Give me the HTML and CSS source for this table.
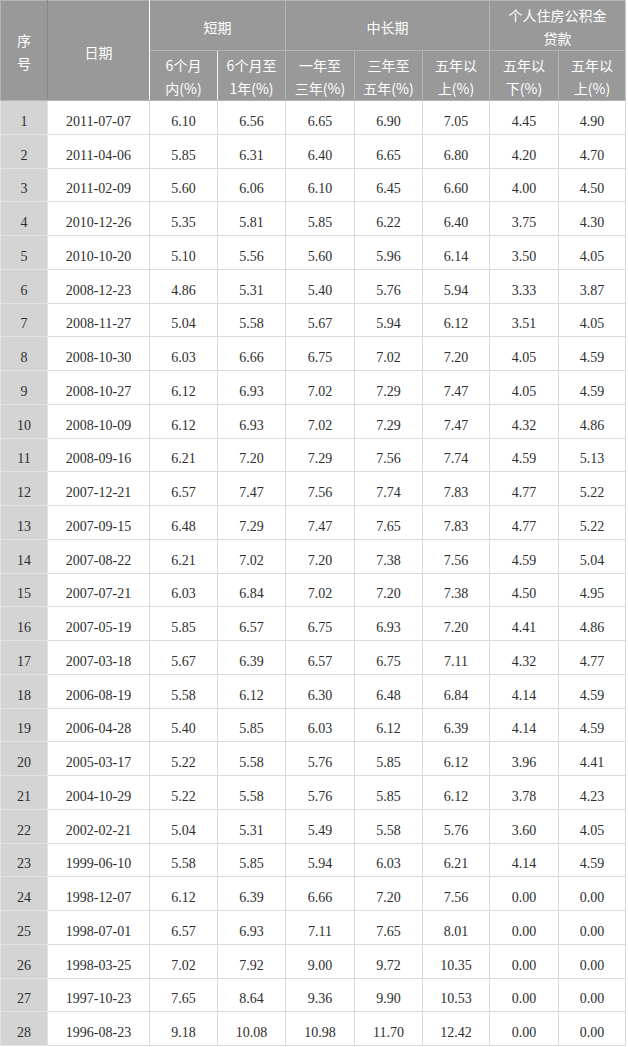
FILE: index.html
```html
<!DOCTYPE html>
<html lang="zh-CN">
<head>
<meta charset="utf-8">
<title>利率表</title>
<link rel="stylesheet" href="styles.css">
</head>
<body>
<table class="rates">
  <colgroup>
    <col class="c-no"><col class="c-date"><col class="c-a"><col class="c-a"><col class="c-b"><col class="c-a"><col class="c-c"><col class="c-b"><col class="c-c">
  </colgroup>
  <thead>
    <tr class="h1">
      <th rowspan="2" class="th-no">序<br>号</th>
      <th rowspan="2" class="th-date">日期</th>
      <th colspan="2">短期</th>
      <th colspan="3">中长期</th>
      <th colspan="2" class="th-last">个人住房公积金<br>贷款</th>
    </tr>
    <tr class="h2">
      <th class="th-w">6个月<br>内(%)</th>
      <th>6个月至<br>1年(%)</th>
      <th>一年至<br>三年(%)</th>
      <th>三年至<br>五年(%)</th>
      <th>五年以<br>上(%)</th>
      <th>五年以<br>下(%)</th>
      <th class="th-last">五年以<br>上(%)</th>
    </tr>
  </thead>
  <tbody>
    <tr><td class="no">1</td><td>2011-07-07</td><td>6.10</td><td>6.56</td><td>6.65</td><td>6.90</td><td>7.05</td><td>4.45</td><td>4.90</td></tr>
    <tr><td class="no">2</td><td>2011-04-06</td><td>5.85</td><td>6.31</td><td>6.40</td><td>6.65</td><td>6.80</td><td>4.20</td><td>4.70</td></tr>
    <tr><td class="no">3</td><td>2011-02-09</td><td>5.60</td><td>6.06</td><td>6.10</td><td>6.45</td><td>6.60</td><td>4.00</td><td>4.50</td></tr>
    <tr class="brk"><td class="no">4</td><td>2010-12-26</td><td>5.35</td><td>5.81</td><td>5.85</td><td>6.22</td><td>6.40</td><td>3.75</td><td>4.30</td></tr>
    <tr><td class="no">5</td><td>2010-10-20</td><td>5.10</td><td>5.56</td><td>5.60</td><td>5.96</td><td>6.14</td><td>3.50</td><td>4.05</td></tr>
    <tr><td class="no">6</td><td>2008-12-23</td><td>4.86</td><td>5.31</td><td>5.40</td><td>5.76</td><td>5.94</td><td>3.33</td><td>3.87</td></tr>
    <tr class="brk"><td class="no">7</td><td>2008-11-27</td><td>5.04</td><td>5.58</td><td>5.67</td><td>5.94</td><td>6.12</td><td>3.51</td><td>4.05</td></tr>
    <tr><td class="no">8</td><td>2008-10-30</td><td>6.03</td><td>6.66</td><td>6.75</td><td>7.02</td><td>7.20</td><td>4.05</td><td>4.59</td></tr>
    <tr><td class="no">9</td><td>2008-10-27</td><td>6.12</td><td>6.93</td><td>7.02</td><td>7.29</td><td>7.47</td><td>4.05</td><td>4.59</td></tr>
    <tr><td class="no">10</td><td>2008-10-09</td><td>6.12</td><td>6.93</td><td>7.02</td><td>7.29</td><td>7.47</td><td>4.32</td><td>4.86</td></tr>
    <tr><td class="no">11</td><td>2008-09-16</td><td>6.21</td><td>7.20</td><td>7.29</td><td>7.56</td><td>7.74</td><td>4.59</td><td>5.13</td></tr>
    <tr><td class="no">12</td><td>2007-12-21</td><td>6.57</td><td>7.47</td><td>7.56</td><td>7.74</td><td>7.83</td><td>4.77</td><td>5.22</td></tr>
    <tr><td class="no">13</td><td>2007-09-15</td><td>6.48</td><td>7.29</td><td>7.47</td><td>7.65</td><td>7.83</td><td>4.77</td><td>5.22</td></tr>
    <tr><td class="no">14</td><td>2007-08-22</td><td>6.21</td><td>7.02</td><td>7.20</td><td>7.38</td><td>7.56</td><td>4.59</td><td>5.04</td></tr>
    <tr><td class="no">15</td><td>2007-07-21</td><td>6.03</td><td>6.84</td><td>7.02</td><td>7.20</td><td>7.38</td><td>4.50</td><td>4.95</td></tr>
    <tr><td class="no">16</td><td>2007-05-19</td><td>5.85</td><td>6.57</td><td>6.75</td><td>6.93</td><td>7.20</td><td>4.41</td><td>4.86</td></tr>
    <tr><td class="no">17</td><td>2007-03-18</td><td>5.67</td><td>6.39</td><td>6.57</td><td>6.75</td><td>7.11</td><td>4.32</td><td>4.77</td></tr>
    <tr><td class="no">18</td><td>2006-08-19</td><td>5.58</td><td>6.12</td><td>6.30</td><td>6.48</td><td>6.84</td><td>4.14</td><td>4.59</td></tr>
    <tr><td class="no">19</td><td>2006-04-28</td><td>5.40</td><td>5.85</td><td>6.03</td><td>6.12</td><td>6.39</td><td>4.14</td><td>4.59</td></tr>
    <tr class="brk"><td class="no">20</td><td>2005-03-17</td><td>5.22</td><td>5.58</td><td>5.76</td><td>5.85</td><td>6.12</td><td>3.96</td><td>4.41</td></tr>
    <tr><td class="no">21</td><td>2004-10-29</td><td>5.22</td><td>5.58</td><td>5.76</td><td>5.85</td><td>6.12</td><td>3.78</td><td>4.23</td></tr>
    <tr><td class="no">22</td><td>2002-02-21</td><td>5.04</td><td>5.31</td><td>5.49</td><td>5.58</td><td>5.76</td><td>3.60</td><td>4.05</td></tr>
    <tr><td class="no">23</td><td>1999-06-10</td><td>5.58</td><td>5.85</td><td>5.94</td><td>6.03</td><td>6.21</td><td>4.14</td><td>4.59</td></tr>
    <tr class="brk"><td class="no">24</td><td>1998-12-07</td><td>6.12</td><td>6.39</td><td>6.66</td><td>7.20</td><td>7.56</td><td>0.00</td><td>0.00</td></tr>
    <tr><td class="no">25</td><td>1998-07-01</td><td>6.57</td><td>6.93</td><td>7.11</td><td>7.65</td><td>8.01</td><td>0.00</td><td>0.00</td></tr>
    <tr><td class="no">26</td><td>1998-03-25</td><td>7.02</td><td>7.92</td><td>9.00</td><td>9.72</td><td>10.35</td><td>0.00</td><td>0.00</td></tr>
    <tr><td class="no">27</td><td>1997-10-23</td><td>7.65</td><td>8.64</td><td>9.36</td><td>9.90</td><td>10.53</td><td>0.00</td><td>0.00</td></tr>
    <tr class="brk"><td class="no">28</td><td>1996-08-23</td><td>9.18</td><td>10.08</td><td>10.98</td><td>11.70</td><td>12.42</td><td>0.00</td><td>0.00</td></tr>
  </tbody>
</table>
</body>
</html>
```
FILE: styles.css
```css
html, body {
  margin: 0;
  padding: 0;
  background: #ffffff;
}

.rates {
  border-collapse: collapse;
  table-layout: fixed;
  width: 625px;
  border-top: 1px solid #dddddd;
  border-left: 1px solid #e2e2e2;
}

.c-no { width: 47px; }
.c-date { width: 102px; }
.c-a { width: 68px; }
.c-b { width: 69px; }
.c-c { width: 67px; }

.rates th {
  background: #999999;
  color: #ffffff;
  font-family: "Noto Sans CJK SC", "Noto Sans", sans-serif;
  font-size: 14px;
  font-weight: 400;
  line-height: 23px;
  text-align: center;
  vertical-align: middle;
  padding: 3px 0 0;
  border: 1px solid #b4b4b4;
}

.rates .h1 { height: 49.5px; }
.rates .h2 { height: 49.5px; }

.rates .th-no { border-right-color: #888888; }
.rates .th-date { border-right-color: #ffffff; }
.rates .th-w { border-right-color: #f4f4f4; }
.rates .th-last { border-right-color: #c8c8c8; }

.rates tbody tr { height: 33.75px; }

.rates td {
  padding: 9px 0 0;
  text-align: center;
  vertical-align: middle;
  font-family: "Liberation Serif", "Times New Roman", serif;
  font-size: 14px;
  line-height: 16px;
  color: #2e2e2e;
  border: 1px solid #dadada;
}

.rates td.no {
  background: #d4d4d4;
  border-color: #e3e3e3;
}

.rates tr.brk td.no {
  border-top-color: #ffffff;
}
```
